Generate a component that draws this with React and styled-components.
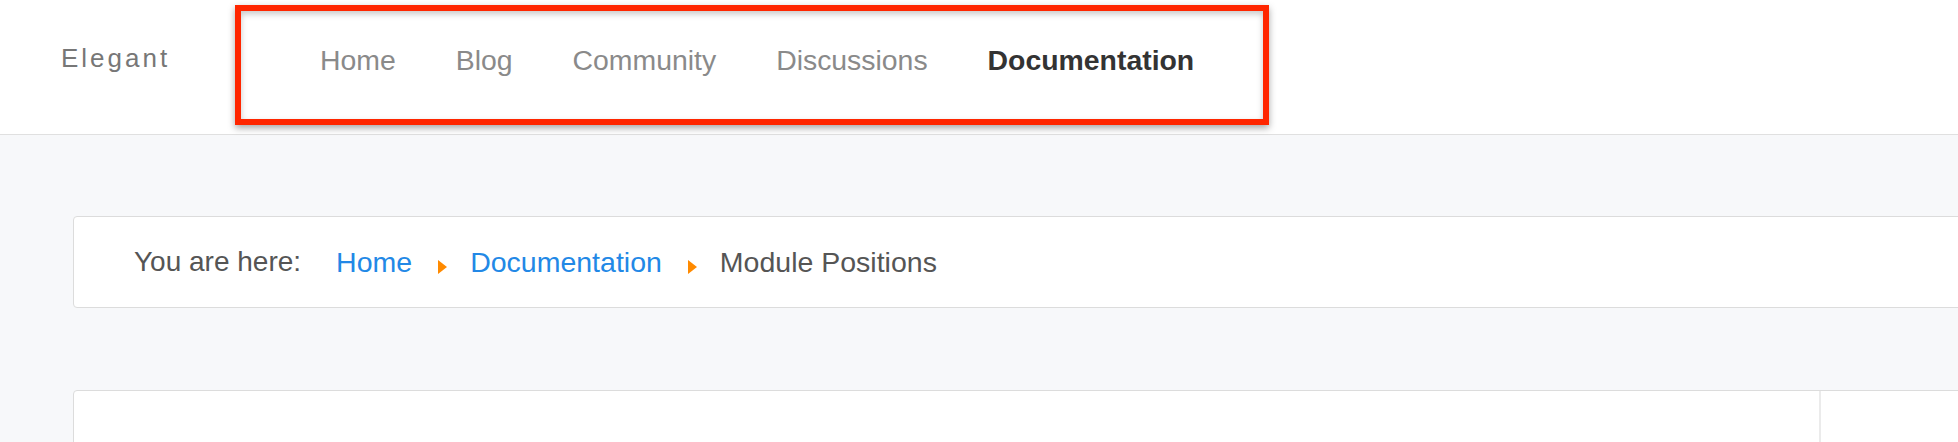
import React from "react";
import styled, { createGlobalStyle } from "styled-components";

const GlobalStyle = createGlobalStyle`
  html, body {
    margin: 0;
    padding: 0;
    background: #f7f8fa;
    font-family: "Liberation Sans", Arial, sans-serif;
  }
  body {
    overflow: hidden;
  }
`;

const Page = styled.div`
  width: 1958px;
  height: 442px;
  overflow: hidden;
  background: #f7f8fa;
`;

const Header = styled.header`
  height: 134px;
  background: #fff;
  border-bottom: 1px solid #e0e0e0;
  display: flex;
  align-items: flex-start;
`;

const Logo = styled.div`
  margin: 43px 0 0 61px;
  width: 174px;
  font-size: 26px;
  letter-spacing: 3px;
  color: #777;
  line-height: 30px;
`;

/* red highlight frame round the menu */
const Nav = styled.nav`
  margin-top: 5px;
  width: 1034px;
  height: 120px;
  box-sizing: border-box;
  border: 6px solid #ff2600;
  box-shadow: 0 3px 7px rgba(0, 0, 0, 0.35), inset 0 3px 6px rgba(0, 0, 0, 0.22);
  display: flex;
  align-items: flex-start;
  padding: 33px 0 0 49px;
`;

const NavItem = styled.a`
  padding: 0 30px;
  font-size: 28.4px;
  line-height: 32px;
  color: ${(p) => (p.$active ? "#333" : "#8a8a8a")};
  font-weight: ${(p) => (p.$active ? 700 : 400)};
  text-decoration: none;
  white-space: nowrap;
`;

const Content = styled.main`
  padding: 81px 0 0 73px;
  display: flex;
  flex-direction: column;
  gap: 82px;
`;

const Breadcrumb = styled.div`
  width: 1900px;
  height: 92px;
  box-sizing: border-box;
  background: #fff;
  border: 1px solid #dcdcdc;
  border-radius: 4px;
  display: flex;
  align-items: center;
  padding: 0 0 0 60px;
  font-size: 28px;
  color: #555;
  white-space: nowrap;
`;

const Label = styled.span`
  margin-right: 35px;
`;

const Crumb = styled.a`
  font-size: 28.5px;
  color: #2288e6;
  text-decoration: none;
`;

const Current = styled.span`
  font-size: 28.5px;
  color: #555;
`;

const Sep = styled.span`
  width: 0;
  height: 0;
  margin: 9px 23px 0 26px;
  border-top: 7px solid transparent;
  border-bottom: 7px solid transparent;
  border-left: 9px solid #ff8a00;
`;

const Body = styled.div`
  width: 1900px;
  height: 200px;
  box-sizing: border-box;
  background: #fff;
  border: 1px solid #dcdcdc;
  border-radius: 4px;
  display: grid;
  grid-template-columns: 1747px 1fr;
`;

const MainCol = styled.div`
  border-right: 2px solid #ebebeb;
`;

const SideCol = styled.aside``;

const navLinks = ["Home", "Blog", "Community", "Discussions", "Documentation"];

export default function App() {
  return (
    <Page>
      <GlobalStyle />
      <Header>
        <Logo>Elegant</Logo>
        <Nav>
          {navLinks.map((l) => (
            <NavItem key={l} $active={l === "Documentation"}>
              {l}
            </NavItem>
          ))}
        </Nav>
      </Header>
      <Content>
        <Breadcrumb>
          <Label>You are here:</Label>
          <Crumb>Home</Crumb>
          <Sep />
          <Crumb>Documentation</Crumb>
          <Sep />
          <Current>Module Positions</Current>
        </Breadcrumb>
        <Body>
          <MainCol />
          <SideCol />
        </Body>
      </Content>
    </Page>
  );
}
